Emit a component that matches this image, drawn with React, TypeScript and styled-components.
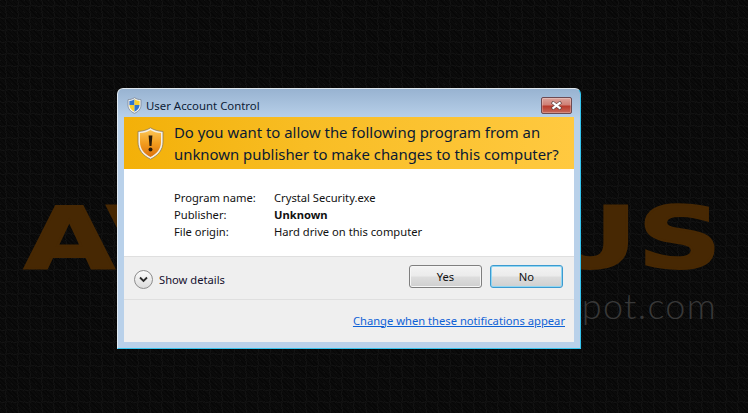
import React, { FunctionComponent } from "react";
import styled, { createGlobalStyle } from "styled-components";

const GlobalStyle = createGlobalStyle`
  html, body {
    margin: 0;
    padding: 0;
    background: #0b0b0b;
  }
`;

const Desktop = styled.main`
  position: relative;
  width: 748px;
  height: 413px;
  overflow: hidden;
  box-sizing: border-box;
  padding: 88px 0 0 117px;
  background-color: #0b0b0b;
  background-image: radial-gradient(circle at 3px 3px, transparent 3px, #141414 3.5px, transparent 4.5px),
    radial-gradient(circle at 9px 9px, transparent 3px, #131313 3.5px, transparent 4.5px),
    repeating-linear-gradient(45deg, #070707 0, #070707 1px, transparent 1px, transparent 3px);
  background-size: 12px 12px, 12px 12px, auto;
`;

const Letters = styled.div<{ $side: "left" | "right" }>`
  position: absolute;
  ${(p) => p.$side}: ${(p) => (p.$side === "left" ? 24 : 26)}px;
  top: 188px;
  font: bold 86px/100px "DejaVu Sans", sans-serif;
  color: #472803;
  -webkit-text-stroke: 2px #472803;
  transform: scaleX(1.36);
  transform-origin: ${(p) => p.$side} center;
  white-space: nowrap;
`;

const BlogUrl = styled.div`
  position: absolute;
  right: 31px;
  top: 285px;
  font: 300 36px/40px "Lato", sans-serif;
  letter-spacing: 1.3px;
  color: #383838;
  white-space: nowrap;
`;

const Dialog = styled.section`
  position: relative;
  z-index: 1;
  width: 464px;
  height: 261px;
  box-sizing: border-box;
  display: flex;
  flex-direction: column;
  padding: 0 6px 6px 6px;
  border: 1px solid #35c4ee;
  border-top-color: #dfe8ef;
  border-left-color: #e2ecf4;
  border-radius: 6px 6px 0 0;
  background: linear-gradient(180deg, #98b3d1 0, #b9d1ea 30px);
`;

const TitleBar = styled.header`
  height: 28px;
  flex: none;
  box-sizing: border-box;
  display: flex;
  align-items: center;
  gap: 4px;
  padding: 4px 2px 0 3px;
  font: 11.4px "Noto Sans", sans-serif;
  color: #0c1c36;
`;

const TitleText = styled.span`
  flex: 1;
`;

const CloseButton = styled.button`
  width: 31px;
  height: 17px;
  padding: 0;
  display: flex;
  align-items: center;
  justify-content: center;
  border: 1px solid #6d4a52;
  border-radius: 2px;
  background: linear-gradient(180deg, #dba39c 0, #d08076 45%, #b83b2d 55%, #c86a5c 100%);
  box-shadow: inset 0 0 0 1px rgba(255, 255, 255, 0.25);
`;

const Body = styled.div`
  flex: 1;
  display: flex;
  flex-direction: column;
  background: #fff;
`;

const Banner = styled.div`
  height: 52px;
  flex: none;
  display: flex;
  align-items: center;
  gap: 10px;
  padding-left: 13px;
  background: linear-gradient(90deg, #f3b008 0, #f8bd24 40%, #ffc940 100%);
`;

const Heading = styled.h1`
  margin: 0;
  font: 400 14.9px/22px "Noto Sans", sans-serif;
  color: #0a1a33;
`;

const Facts = styled.dl`
  height: 87px;
  flex: none;
  margin: 0;
  box-sizing: border-box;
  padding: 20px 0 0 50px;
  display: grid;
  grid-template-columns: 100px 1fr;
  grid-auto-rows: 17px;
  align-items: center;
  font: 11.2px "Noto Sans", sans-serif;
  color: #111;
`;

const Term = styled.dt``;

const Value = styled.dd<{ $strong?: boolean }>`
  margin: 0;
  font-weight: ${(p) => (p.$strong ? 700 : 400)};
`;

const Footer = styled.div`
  flex: 1;
  display: flex;
  flex-direction: column;
  background: #efefef;
  border-top: 1px solid #dfdfdf;
`;

const ActionRow = styled.div`
  height: 43px;
  flex: none;
  box-sizing: border-box;
  display: flex;
  align-items: center;
  padding: 0 11px 0 10px;
  border-bottom: 1px solid #dfdfdf;
`;

const DetailsToggle = styled.div`
  flex: 1;
  display: flex;
  align-items: center;
  gap: 6px;
  padding-top: 3px;
  font: 11.2px "Noto Sans", sans-serif;
  color: #15102e;
`;

const Chevron = styled.span`
  width: 19px;
  height: 19px;
  box-sizing: border-box;
  display: flex;
  align-items: center;
  justify-content: center;
  border: 1px solid #8c8c8c;
  border-radius: 50%;
  background: linear-gradient(180deg, #fbfbfb 0, #dcdcdc 100%);
`;

const ActionButton = styled.button<{ $focused?: boolean }>`
  width: 73px;
  height: 23px;
  margin-left: 8px;
  margin-top: -3px;
  padding: 0;
  border: 1px solid ${(p) => (p.$focused ? "#3c9ad0" : "#7f7f7f")};
  border-radius: 3px;
  background: linear-gradient(180deg, #f3f3f3 0, #ebebeb 48%, #dddddd 52%, #cfcfcf 100%);
  box-shadow: inset 0 0 0 1px ${(p) => (p.$focused ? "#8fd6f2" : "#f6f6f6")};
  font: 11.2px "Noto Sans", sans-serif;
  color: #111;
`;

const LinkRow = styled.div`
  flex: 1;
  display: flex;
  align-items: center;
  justify-content: flex-end;
  padding: 0 9px 2px 0;
`;

const HelpLink = styled.a`
  font: 11.2px "Noto Sans", sans-serif;
  color: #0f62d6;
  text-decoration: underline;
`;

const TitleShield: FunctionComponent = () => (
  <svg width="15" height="17" viewBox="0 0 15 17">
    <path d="M7.5 0.7C9.5 2 11.5 2.6 14 2.7V8c0 4-2.6 6.6-6.5 8.3C3.6 14.6 1 12 1 8V2.7C3.5 2.6 5.5 2 7.5 0.7z" fill="#f4f4f4" stroke="#7b8594" strokeWidth="0.8" />
    <path d="M7.5 2.2V8H2.4V3.9C4.2 3.8 5.9 3.2 7.5 2.2z" fill="#2f74cf" />
    <path d="M7.5 2.2C9.1 3.2 10.8 3.8 12.6 3.9V8H7.5z" fill="#f6ce2e" />
    <path d="M2.4 8H7.5V14.7C4.5 13.3 2.6 11.2 2.4 8z" fill="#f6ce2e" />
    <path d="M7.5 8H12.6C12.4 11.2 10.5 13.3 7.5 14.7z" fill="#2f74cf" />
  </svg>
);

const WarningShield: FunctionComponent = () => (
  <svg width="27" height="33" viewBox="0 0 27 33" style={{ flex: "none" }}>
    <defs>
      <linearGradient id="warn" x1="0" y1="0" x2="0" y2="1">
        <stop offset="0" stopColor="#fcc555" />
        <stop offset="0.5" stopColor="#f29c1e" />
        <stop offset="1" stopColor="#dc700c" />
      </linearGradient>
    </defs>
    <path d="M13.5 0.8C17 3 21 4.2 26 4.4V15c0 8-5 13.5-12.5 17.2C6 28.5 1 23 1 15V4.4C6 4.2 10 3 13.5 0.8z" fill="#f6f1e6" stroke="#8e7a55" strokeWidth="0.8" />
    <path d="M13.5 3C16.5 4.8 20 5.9 24 6.1V15c0 7-4.3 11.8-10.5 15C7.3 26.8 3 22 3 15V6.1C7 5.9 10.5 4.8 13.5 3z" fill="url(#warn)" />
    <path d="M11.6 8.500h3.800l-0.900 10.500h-2z" fill="#2a1a08" />
    <circle cx="13.5" cy="22.5" r="2" fill="#2a1a08" />
  </svg>
);

const App: FunctionComponent = () => (
  <Desktop>
    <GlobalStyle />
    <Letters $side="left">AV</Letters>
    <Letters $side="right">US</Letters>
    <BlogUrl>spot.com</BlogUrl>
    <Dialog>
      <TitleBar>
        <TitleShield />
        <TitleText>User Account Control</TitleText>
        <CloseButton aria-label="Close">
          <svg width="13" height="9" viewBox="0 0 13 9">
            <path d="M2 1l9 7M11 1L2 8" stroke="#5a4040" strokeWidth="3.4" />
            <path d="M2.5 1.3l8 6.4M10.5 1.3l-8 6.4" stroke="#fff" strokeWidth="2.2" />
          </svg>
        </CloseButton>
      </TitleBar>
      <Body>
        <Banner>
          <WarningShield />
          <Heading>
            Do you want to allow the following program from an
            <br />
            unknown publisher to make changes to this computer?
          </Heading>
        </Banner>
        <Facts>
          <Term>Program name:</Term>
          <Value>Crystal Security.exe</Value>
          <Term>Publisher:</Term>
          <Value $strong>Unknown</Value>
          <Term>File origin:</Term>
          <Value>Hard drive on this computer</Value>
        </Facts>
        <Footer>
          <ActionRow>
            <DetailsToggle>
              <Chevron>
                <svg width="9" height="7" viewBox="0 0 9 7">
                  <path d="M1 1.5l3.5 3.5L8 1.5" fill="none" stroke="#2a2a2a" strokeWidth="1.8" />
                </svg>
              </Chevron>
              Show details
            </DetailsToggle>
            <ActionButton>Yes</ActionButton>
            <ActionButton $focused>No</ActionButton>
          </ActionRow>
          <LinkRow>
            <HelpLink href="#">Change when these notifications appear</HelpLink>
          </LinkRow>
        </Footer>
      </Body>
    </Dialog>
  </Desktop>
);

export default App;
